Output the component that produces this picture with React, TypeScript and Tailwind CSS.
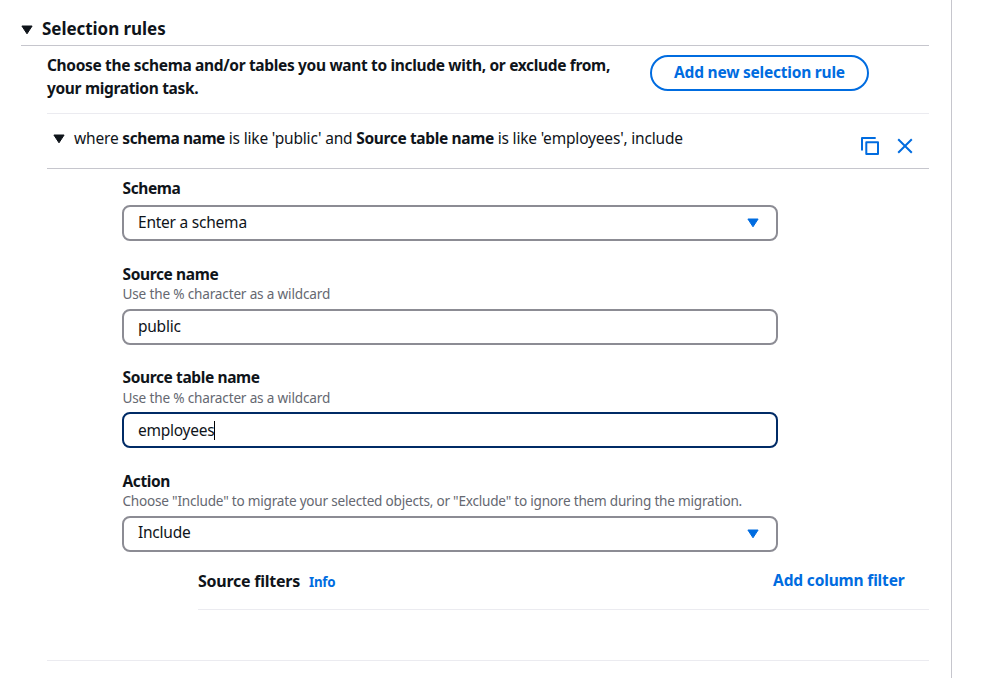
import type { ReactNode } from "react";

function Caret({ className }: { className: string }) {
  return (
    <svg width="12" height="10" viewBox="0 0 12 10" className={className} fill="currentColor" stroke="currentColor" strokeWidth="1" strokeLinejoin="round">
      <path d="M0.9 1H11.1L6 8.8Z" />
    </svg>
  );
}

function CopyIcon() {
  return (
    <svg width="18" height="18" viewBox="0 0 18 18" fill="none" stroke="currentColor" strokeWidth="2" strokeLinejoin="round">
      <path d="M1 13.5V1H14.7" />
      <path d="M5.3 5.3H17V17H5.3Z" />
    </svg>
  );
}

function CloseIcon() {
  return (
    <svg width="16" height="16" viewBox="0 0 16 16" fill="none" stroke="currentColor" strokeWidth="2">
      <path d="M1.2 1.2L14.8 14.8M14.8 1.2L1.2 14.8" />
    </svg>
  );
}

function Field({ label, hint, className, hintClass = "", children }: { label: string; hint?: string; className: string; hintClass?: string; children: ReactNode }) {
  return (
    <div className={className}>
      <div className="pl-[0.5px] text-[15.5px] leading-5 font-bold tracking-[-0.38px]">{label}</div>
      {hint ? (
        <div className={`pl-[0.5px] text-[13.6px] leading-5 whitespace-nowrap text-[#656871] ${hintClass || "mb-[5px] tracking-[-0.18px]"}`}>{hint}</div>
      ) : (
        <div className="h-[7px]" />
      )}
      {children}
    </div>
  );
}

function Select({ value, textClass }: { value: string; textClass: string }) {
  return (
    <div className="flex h-9 items-center justify-between rounded-lg border-2 border-[#8c8c94] pr-[17px] pl-3.5 text-[15.5px] leading-6 tracking-[-0.23px]">
      <span className={textClass}>{value}</span>
      <Caret className="text-[#006ce0]" />
    </div>
  );
}

function Input({ value, focused = false }: { value: string; focused?: boolean }) {
  return (
    <div className={`flex h-9 items-center rounded-lg border-2 pl-3.5 text-[15.5px] leading-6 tracking-[-0.25px] ${focused ? "border-[#002b66]" : "border-[#8c8c94]"}`}>
      <span className={focused ? "" : "-mt-0.5"}>{value}</span>
      {focused && <span className="h-[19px] w-px bg-black" />}
    </div>
  );
}

export default function App() {
  return (
    <div className="flex h-[678px] bg-white font-['Noto_Sans',sans-serif] text-[#0f141a]">
      <main className="w-[952px] border-r border-[#c6c6cd] pt-3 pr-[22.5px] pl-[20.5px]">
        <h2 className="flex h-[34px] items-center border-b border-[#c6c6cd] text-[17px] font-bold tracking-[-0.05px]">
          <Caret className="mt-0.5 mr-[9px] ml-[0.5px]" />
          Selection rules
        </h2>
        <section className="ml-[26.5px]">
          <div className="flex h-[68px] items-start border-b border-[#ebebf0] pt-2">
            <p className="w-[603px] text-[15.5px] leading-[23px] font-bold tracking-[-0.335px]">
              Choose the schema and/or tables you want to include with, or exclude from,
              <br />
              your migration task.
            </p>
            <button className="mt-px h-9 w-[219px] rounded-full border-2 border-[#006ce0] text-[15.5px] font-bold tracking-[-0.22px] text-[#006ce0]">
              Add new selection rule
            </button>
          </div>
          <div className="flex h-[55px] items-start justify-between border-b border-[#c6c6cd] pt-3 pr-[15.5px] pl-1.5">
            <div className="flex items-center">
              <Caret className="mt-0.5 mr-[9px]" />
              <p className="text-[15.5px] leading-6 tracking-[-0.18px] whitespace-nowrap">
                where <b className="font-bold tracking-[-0.42px]">schema name</b> is like 'public' and{" "}
                <b className="font-bold tracking-[-0.36px]">Source table name</b> is like 'employees', include
              </p>
            </div>
            <div className="flex items-center gap-[18px] pt-[11px] text-[#006ce0]">
              <CopyIcon />
              <CloseIcon />
            </div>
          </div>
          <div className="ml-[75px] w-[656px] pt-[9px]">
            <Field label="Schema" className="">
              <Select value="Enter a schema" textClass="-mt-0.5" />
            </Field>
            <Field label="Source name" hint="Use the % character as a wildcard" className="mt-[23px]">
              <Input value="public" />
            </Field>
            <Field label="Source table name" hint="Use the % character as a wildcard" className="mt-[22px]" hintClass="mb-1 mt-px tracking-[-0.18px]">
              <Input value="employees" focused />
            </Field>
            <Field label="Action" hint={'Choose "Include" to migrate your selected objects, or "Exclude" to ignore them during the migration.'} className="mt-[23px]" hintClass="mb-[5px] tracking-[-0.225px]">
              <Select value="Include" textClass="-mt-1" />
            </Field>
          </div>
          <div className="ml-[151px] flex h-[58px] items-center border-b border-[#ebebf0] pr-6">
            <h3 className="mt-px text-[16px] font-bold tracking-[-0.25px]">Source filters</h3>
            <a className="mt-1 ml-[9px] text-[13.3px] font-bold tracking-[-0.25px] text-[#006ce0]">Info</a>
            <button className="ml-auto text-[15.5px] font-bold tracking-[-0.16px] text-[#006ce0]">Add column filter</button>
          </div>
          <div className="h-[51px] border-b border-[#ebebf0]" />
        </section>
      </main>
    </div>
  );
}
